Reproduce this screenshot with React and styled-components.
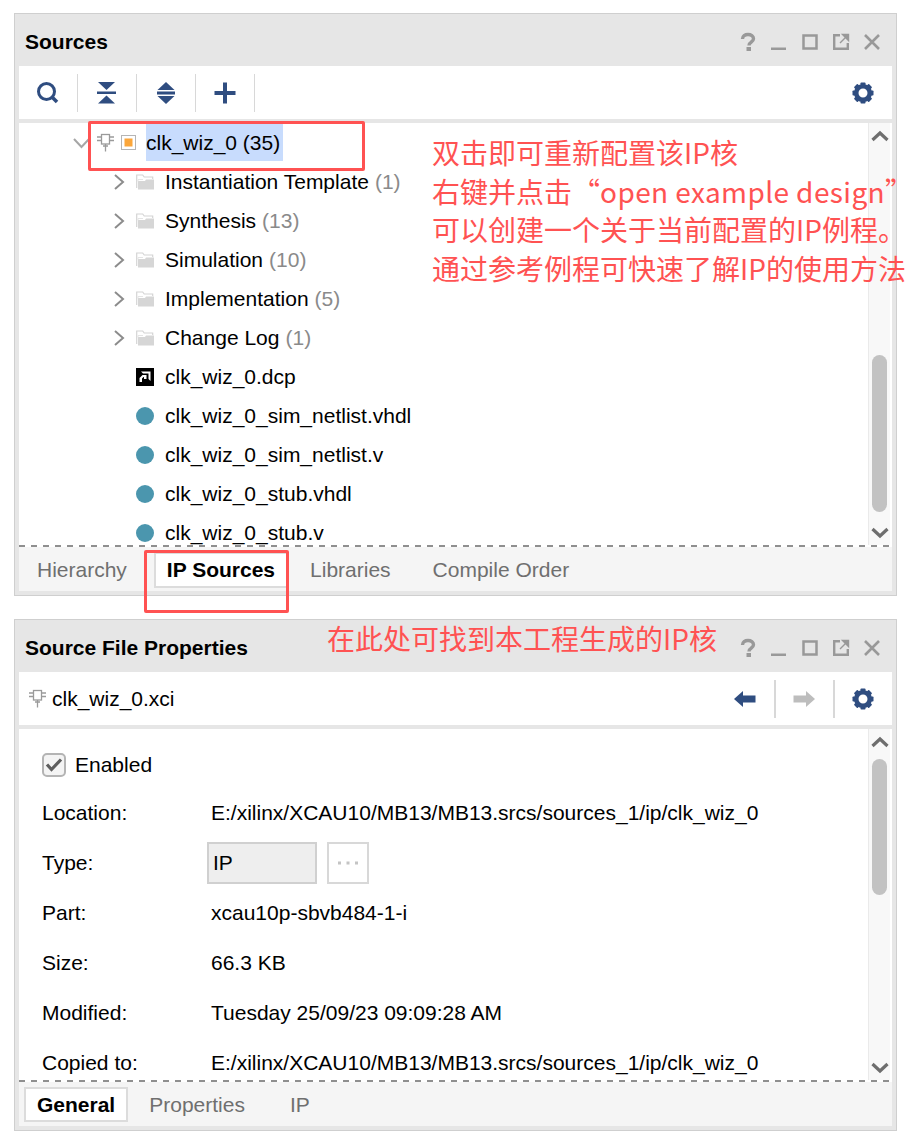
import React from "react";
import styled, { createGlobalStyle } from "styled-components";

const Global = createGlobalStyle`
  html, body { margin: 0; padding: 0; background: #fff; }
  body { font-family: "Liberation Sans", Arial, sans-serif; color: #000; }
`;

const Page = styled.div`
  position: relative;
  width: 912px;
  height: 1148px;
  padding: 13px 15px 0 14px;
  box-sizing: border-box;
  display: flex;
  flex-direction: column;
  gap: 23px;
  overflow: hidden;
`;
const Panel = styled.section`
  height: ${(p) => p.$h}px;
  box-sizing: border-box;
  border: 1px solid #cfcfcf;
  background: #e6e6e6;
  padding: 0 4px 4px;
  display: flex;
  flex-direction: column;
`;
const TitleBar = styled.header`
  height: 52px;
  flex: none;
  display: flex;
  align-items: center;
  justify-content: space-between;
  padding: 4px 10px 0 6px;
  box-sizing: border-box;
`;
const Title = styled.h2`
  margin: 0;
  font-size: 21px;
  font-weight: 700;
`;
const WindowIcons = styled.div`
  display: flex;
  align-items: center;
  gap: 11px;
`;
const Toolbar = styled.div`
  height: 53px;
  flex: none;
  background: #fff;
  display: flex;
  align-items: center;
  margin-bottom: 4px;
`;
const ToolBtn = styled.div`
  width: 57.5px;
  height: 100%;
  display: flex;
  align-items: center;
  justify-content: center;
  flex: none;
`;
const Sep = styled.div`
  width: 1.5px;
  height: 38px;
  background: #d8d8d8;
  flex: none;
`;
const Spacer = styled.div`
  flex: 1;
`;
const FileLabel = styled.div`
  display: flex;
  align-items: center;
  gap: 5px;
  padding-left: 9px;
  font-size: 21px;
`;
const Body = styled.div`
  flex: 1;
  min-height: 0;
  background: #fff;
  display: flex;
  overflow: hidden;
`;
const Content = styled.div`
  flex: 1;
  min-width: 0;
  overflow: hidden;
`;
const Row = styled.div`
  height: 39px;
  display: flex;
  align-items: center;
  padding-left: ${(p) => p.$indent}px;
  font-size: 21px;
  white-space: nowrap;
  flex: none;
`;
const Chevron = styled.span`
  width: 23px;
  flex: none;
  display: flex;
  align-items: center;
`;
const IconSlot = styled.span`
  width: 29px;
  flex: none;
  display: flex;
  align-items: center;
`;
const Count = styled.span`
  color: #8a8a8a;
  margin-left: 6px;
`;
const PinGap = styled.span`
  width: 6px;
  flex: none;
`;
const Selected = styled.span`
  background: #c8dcfd;
  height: 37px;
  line-height: 37px;
  display: inline-block;
  margin-left: 10px;
  padding-right: 3px;
`;
const ScrollTrack = styled.div`
  width: 22px;
  margin-right: 2px;
  flex: none;
  background: #f8f8f8;
  border-left: 1px solid #eaeaea;
  box-sizing: border-box;
  display: flex;
  flex-direction: column;
  align-items: center;
`;
const ArrowBox = styled.div`
  height: ${(p) => p.$h}px;
  flex: none;
  display: flex;
  align-items: center;
  justify-content: center;
  width: 100%;
`;
const ThumbGap = styled.div`
  height: ${(p) => p.$h}px;
  flex: none;
`;
const Thumb = styled.div`
  width: 15px;
  height: ${(p) => p.$h}px;
  background: #c2c2c2;
  border-radius: 8px;
  flex: none;
`;
const Dash = styled.div`
  height: 2px;
  flex: none;
  background: repeating-linear-gradient(90deg, #8f8f8f 0 6px, transparent 6px 12px), #fff;
`;
const TabBar = styled.nav`
  flex: none;
  height: ${(p) => p.$h}px;
  background: #f5f5f5;
  display: flex;
  align-items: flex-start;
  font-size: 21px;
`;
const Tab = styled.div`
  margin-left: ${(p) => p.$ml}px;
  margin-top: ${(p) => p.$mt}px;
  height: ${(p) => p.$tabH}px;
  padding: 0 ${(p) => (p.$active ? 11 : 0)}px;
  box-sizing: border-box;
  display: flex;
  align-items: center;
  white-space: nowrap;
  color: ${(p) => (p.$active ? "#000" : "#6f6f6f")};
  font-weight: ${(p) => (p.$active ? 700 : 400)};
  background: ${(p) => (p.$active ? "#fff" : "transparent")};
  border: ${(p) => (p.$active ? "2px solid #dcdcdc" : "0")};
`;
const Props = styled.div`
  padding: 12px 0 0 23px;
  font-size: 21px;
`;
const CheckRow = styled.div`
  height: 47px;
  display: flex;
  align-items: center;
  gap: 9px;
  padding-bottom: 1px;
  box-sizing: content-box;
`;
const CheckBox = styled.span`
  width: 24px;
  height: 24px;
  box-sizing: border-box;
  border: 2px solid #b4b4b4;
  border-radius: 5px;
  background: #f4f4f4;
  display: flex;
  align-items: center;
  justify-content: center;
`;
const PropRow = styled.div`
  height: 50px;
  display: grid;
  grid-template-columns: 169px 1fr;
  align-items: center;
  white-space: nowrap;
  margin-top: ${(p) => (p.$first ? -1 : 0)}px;
`;
const FieldWrap = styled.div`
  display: flex;
  align-items: center;
  gap: 10px;
  margin-left: -4px;
`;
const Field = styled.div`
  width: 110px;
  height: 42px;
  box-sizing: border-box;
  border: 2px solid #d0d0d0;
  background: #eeeeee;
  padding-left: 4px;
  display: flex;
  align-items: center;
`;
const DotsBtn = styled.div`
  width: 42px;
  height: 42px;
  box-sizing: border-box;
  border: 2px solid #d8d8d8;
  display: flex;
  align-items: center;
  justify-content: center;
`;
const RedBox = styled.div`
  position: absolute;
  box-sizing: border-box;
  border: 3px solid #ff5252;
  border-radius: 2px;
  left: ${(p) => p.$x}px;
  top: ${(p) => p.$y}px;
  width: ${(p) => p.$w}px;
  height: ${(p) => p.$h}px;
`;
const Note = styled.div`
  position: absolute;
  left: ${(p) => p.$x}px;
  top: ${(p) => p.$y}px;
  color: #ff5252;
  font-family: "Noto Sans CJK SC", sans-serif;
  font-size: 28px;
  line-height: 38.7px;
  white-space: nowrap;
`;
const Latin = styled.span`
  letter-spacing: 0.4px;
`;

const NAVY = "#2f4d80";
const GREY = "#999";

const Help = () => (
  <svg width="20" height="20" viewBox="0 0 20 20"><path d="M4.500 7C4.500 4 7 2.500 10 2.500S15.500 4 15.500 6.800c0 2-1.300 2.800-2.800 3.800-1.300.8-1.700 1.500-1.700 2.900" fill="none" stroke={GREY} strokeWidth="3.400" /><rect x="8.500" y="15" width="4.500" height="4" fill={GREY} /></svg>
);
const Minimize = () => (
  <svg width="20" height="20" viewBox="0 0 20 20"><rect x="2" y="15.500" width="15" height="2.500" fill={GREY} /></svg>
);
const Maximize = () => (
  <svg width="20" height="20" viewBox="0 0 20 20"><rect x="3.500" y="3.500" width="13" height="13" fill="none" stroke={GREY} strokeWidth="2.500" /></svg>
);
const PopOut = () => (
  <svg width="20" height="20" viewBox="0 0 20 20"><path d="M9 3.200H3.200v13.600h13.600V11" fill="none" stroke={GREY} strokeWidth="2.400" /><path d="M9 11l7-7M11.500 2.500h6v6z" fill={GREY} stroke={GREY} strokeWidth="1.400" /></svg>
);
const CloseX = () => (
  <svg width="20" height="20" viewBox="0 0 20 20"><path d="M3 3l14 14M17 3L3 17" stroke={GREY} strokeWidth="2.600" /></svg>
);
const WinIcons = () => (
  <WindowIcons>
    <Help /><Minimize /><Maximize /><PopOut /><CloseX />
  </WindowIcons>
);
const Search = () => (
  <svg width="24" height="24" viewBox="0 0 24 24"><circle cx="10.500" cy="10.500" r="8" fill="none" stroke={NAVY} strokeWidth="3" /><path d="M16.500 16.500l4.500 4.500" stroke={NAVY} strokeWidth="3.500" /></svg>
);
const Collapse = () => (
  <svg width="20" height="24" viewBox="0 0 20 24"><path d="M1 1h17l-8.500 8zM0 10.500h19v2.500H0zM9.500 14.500L18 22.500H1z" fill={NAVY} /></svg>
);
const Expand = () => (
  <svg width="20" height="24" viewBox="0 0 20 24"><path d="M10 1l8.500 8h-17zM1 10.500h18v3H1zM1.500 15h17L10 23z" fill={NAVY} /></svg>
);
const Plus = () => (
  <svg width="24" height="24" viewBox="0 0 24 24"><path d="M10 1.500h4v8.500h8.500v4H14v8.500h-4V14H1.500v-4H10z" fill={NAVY} /></svg>
);
const Gear = () => (
  <svg width="22" height="22" viewBox="0 0 22 22">
    <g fill={NAVY}>
      {[0, 45, 90, 135, 180, 225, 270, 315].map((a) => (
        <rect key={a} x="8.500" y="0.500" width="5" height="5" rx="0.800" transform={`rotate(${a} 11 11)`} />
      ))}
    </g>
    <circle cx="11" cy="11" r="6.800" fill="none" stroke={NAVY} strokeWidth="4.600" />
  </svg>
);
const ArrowLeft = ({ c }) => (
  <svg width="22" height="18" viewBox="0 0 22 18"><path d="M0 9l9-8v4.500h12.500v7H9V17z" fill={c} /></svg>
);
const ArrowRight = ({ c }) => (
  <svg width="22" height="18" viewBox="0 0 22 18"><path d="M22 9l-9-8v4.500H.5v7H13V17z" fill={c} /></svg>
);
const ChevRight = () => (
  <svg width="12" height="18" viewBox="0 0 12 18"><path d="M2 2l8 7-8 7" fill="none" stroke="#8c8c8c" strokeWidth="2" /></svg>
);
const ChevDown = () => (
  <svg width="17" height="12" viewBox="0 0 17 12"><path d="M1 2l7.500 8L16 2" fill="none" stroke="#a6a6a6" strokeWidth="2" /></svg>
);
const ScrollUp = () => (
  <svg width="18" height="12" viewBox="0 0 18 12"><path d="M1.500 10L9 3l7.500 7" fill="none" stroke="#6e6e6e" strokeWidth="3.200" /></svg>
);
const ScrollDown = () => (
  <svg width="18" height="12" viewBox="0 0 18 12"><path d="M1.500 2L9 9l7.500-7" fill="none" stroke="#6e6e6e" strokeWidth="3.200" /></svg>
);
const Pin = () => (
  <svg width="19" height="19" viewBox="0 0 19 19" fill="none" stroke="#9a9a9a" strokeWidth="1.300">
    <rect x="5.500" y="1.500" width="8" height="9.500" fill="#fff" />
    <path d="M9.500 11v7.500M1 4h4.500M1 7.500h4.500M13.500 4H18M13.500 7.500H18M7 13h5" />
  </svg>
);
const OrangeSquare = () => (
  <svg width="15" height="15" viewBox="0 0 15 15"><rect x="0.500" y="0.500" width="14" height="14" fill="#fff" stroke="#b5b5b5" /><rect x="3.500" y="3.500" width="8" height="8" fill="#fba63a" /></svg>
);
const Folder = () => (
  <svg width="18" height="16" viewBox="0 0 18 16"><path d="M0.700 14V1h6l1.500 2h8.500v2" fill="#fff" stroke="#d4d4d4" strokeWidth="1.200" /><path d="M2 15.500V7h7l1-1.500h8V15.500z" fill="#d6d6d6" /><path d="M2 7.500V5.500h5" fill="none" stroke="#e4e4e4" /></svg>
);
const Amd = () => (
  <svg width="18" height="18" viewBox="0 0 18 18"><rect width="18" height="18" fill="#000" /><path d="M5 3.500h9.500V13L12.500 11V5.500H7z" fill="#fff" /><path d="M3.500 10l3-3h4v4H8v-2H7.500L6 10.500V14H3.500z" fill="#fff" /></svg>
);
const Dot = () => (
  <svg width="18" height="18" viewBox="0 0 18 18"><circle cx="9" cy="9" r="9" fill="#4b96ae" /></svg>
);
const Check = () => (
  <svg width="18" height="15" viewBox="0 0 18 15"><path d="M2 7.500l4.500 5L16 2.500" fill="none" stroke="#5e5e5e" strokeWidth="3.200" /></svg>
);
const Dots = () => (
  <svg width="22" height="4" viewBox="0 0 22 4"><g fill="#c4c4c4"><rect x="1" y="0.500" width="3" height="3" /><rect x="9.500" y="0.500" width="3" height="3" /><rect x="18" y="0.500" width="3" height="3" /></g></svg>
);

const folders = [
  ["Instantiation Template", 1],
  ["Synthesis", 13],
  ["Simulation", 10],
  ["Implementation", 5],
  ["Change Log", 1],
];
const files = [
  "clk_wiz_0_sim_netlist.vhdl",
  "clk_wiz_0_sim_netlist.v",
  "clk_wiz_0_stub.vhdl",
  "clk_wiz_0_stub.v",
];
const props = [
  ["Location:", "E:/xilinx/XCAU10/MB13/MB13.srcs/sources_1/ip/clk_wiz_0"],
  ["Type:", null],
  ["Part:", "xcau10p-sbvb484-1-i"],
  ["Size:", "66.3 KB"],
  ["Modified:", "Tuesday 25/09/23 09:09:28 AM"],
  ["Copied to:", "E:/xilinx/XCAU10/MB13/MB13.srcs/sources_1/ip/clk_wiz_0"],
];

export default function App() {
  return (
    <Page>
      <Global />
      <Panel $h={583}>
        <TitleBar>
          <Title>Sources</Title>
          <WinIcons />
        </TitleBar>
        <Toolbar>
          <ToolBtn><Search /></ToolBtn><Sep />
          <ToolBtn><Collapse /></ToolBtn><Sep />
          <ToolBtn><Expand /></ToolBtn><Sep />
          <ToolBtn><Plus /></ToolBtn><Sep />
          <Spacer />
          <ToolBtn><Gear /></ToolBtn>
        </Toolbar>
        <Body>
          <Content>
            <Row $indent={54}>
              <Chevron><ChevDown /></Chevron>
              <Pin /><PinGap /><OrangeSquare />
              <Selected>clk_wiz_0 (35)</Selected>
            </Row>
            {folders.map(([n, c]) => (
              <Row $indent={94} key={n}>
                <Chevron><ChevRight /></Chevron>
                <IconSlot><Folder /></IconSlot>
                {n}<Count>({c})</Count>
              </Row>
            ))}
            <Row $indent={117}>
              <IconSlot><Amd /></IconSlot>clk_wiz_0.dcp
            </Row>
            {files.map((f) => (
              <Row $indent={117} key={f}>
                <IconSlot><Dot /></IconSlot>{f}
              </Row>
            ))}
          </Content>
          <ScrollTrack>
            <ArrowBox $h={26}><ScrollUp /></ArrowBox>
            <ThumbGap $h={206} />
            <Thumb $h={157} />
            <Spacer />
            <ArrowBox $h={24}><ScrollDown /></ArrowBox>
          </ScrollTrack>
        </Body>
        <Dash />
        <TabBar $h={44}>
          <Tab $ml={18} $mt={5} $tabH={36}>Hierarchy</Tab>
          <Tab $ml={27} $mt={5} $tabH={36} $active>IP Sources</Tab>
          <Tab $ml={22} $mt={5} $tabH={36}>Libraries</Tab>
          <Tab $ml={42} $mt={5} $tabH={36}>Compile Order</Tab>
        </TabBar>
      </Panel>

      <Panel $h={512}>
        <TitleBar>
          <Title>Source File Properties</Title>
          <WinIcons />
        </TitleBar>
        <Toolbar>
          <FileLabel><Pin />clk_wiz_0.xci</FileLabel>
          <Spacer />
          <ToolBtn><ArrowLeft c={NAVY} /></ToolBtn><Sep />
          <ToolBtn><ArrowRight c="#bdbdbd" /></ToolBtn><Sep />
          <ToolBtn><Gear /></ToolBtn>
        </Toolbar>
        <Body>
          <Content>
            <Props>
              <CheckRow>
                <CheckBox><Check /></CheckBox>Enabled
              </CheckRow>
              {props.map(([k, v], i) => (
                <PropRow key={k} $first={i === 0}>
                  <span>{k}</span>
                  {v ? <span>{v}</span> : (
                    <FieldWrap>
                      <Field>IP</Field>
                      <DotsBtn><Dots /></DotsBtn>
                    </FieldWrap>
                  )}
                </PropRow>
              ))}
            </Props>
          </Content>
          <ScrollTrack>
            <ArrowBox $h={26}><ScrollUp /></ArrowBox>
            <ThumbGap $h={4} />
            <Thumb $h={136} />
            <Spacer />
            <ArrowBox $h={24}><ScrollDown /></ArrowBox>
          </ScrollTrack>
        </Body>
        <Dash />
        <TabBar $h={44}>
          <Tab $ml={5} $mt={5} $tabH={35} $active>General</Tab>
          <Tab $ml={21} $mt={5} $tabH={35}>Properties</Tab>
          <Tab $ml={45} $mt={5} $tabH={35}>IP</Tab>
        </TabBar>
      </Panel>

      <RedBox $x={88} $y={121} $w={277} $h={50} />
      <RedBox $x={144} $y={550} $w={145} $h={63} />
      <Note $x={432} $y={133} lang="zh-CN">
        双击即可重新配置该IP核<br />
        右键并点击“<Latin>open example design</Latin>”<br />
        可以创建一个关于当前配置的IP例程。<br />
        通过参考例程可快速了解IP的使用方法
      </Note>
      <Note $x={327} $y={619} lang="zh-CN">在此处可找到本工程生成的IP核</Note>
    </Page>
  );
}
